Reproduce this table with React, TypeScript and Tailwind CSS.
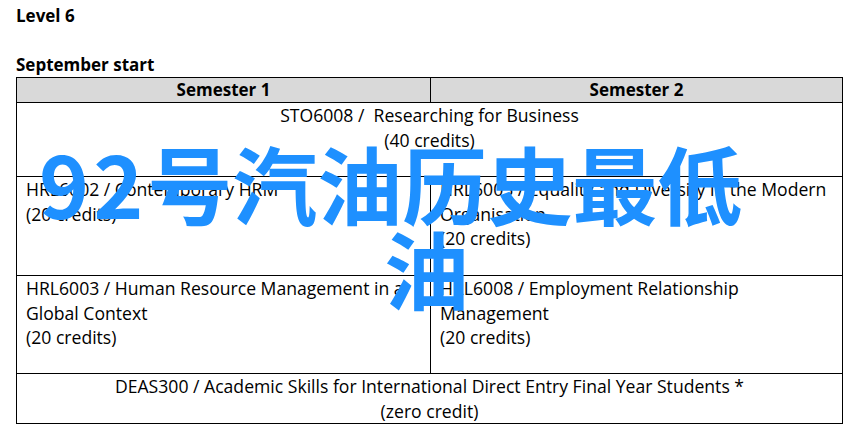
import React from 'react';

type Cell = {
    lines: string[];
};

type Row = {
    height: string;
    left?: Cell;
    right?: Cell;
    full?: Cell;
};

const rows: Row[] = [
    {height: 'h-[74px]', full: {lines: ['STO6008 /\u00a0 Researching for Business', '(40 credits)']}},
    {
        height: 'h-[99px]',
        left: {lines: ['HRL6002 / Contemporary HRM', '(20 credits)']},
        right: {lines: ['HRL6003 / Equality and Diversity in the Modern', 'Organisation', '(20 credits)']},
    },
    {
        height: 'h-[98px]',
        left: {lines: ['HRL6003 / Human Resource Management in a', 'Global Context', '(20 credits)']},
        right: {lines: ['HRL6008 / Employment Relationship', 'Management', '(20 credits)']},
    },
    {height: 'h-[50px]', full: {lines: ['DEAS300 / Academic Skills for International Direct Entry Final Year Students *', '(zero credit)']}},
];

function Lines({cell}: { cell: Cell }) {
    return (
        <>
            {cell.lines.map((line, i) => (
                <div key={i} className="leading-[24.5px]">{line}</div>
            ))}
        </>
    );
}

export default function App() {
    return (
        <div className="relative w-[856px] h-[434px] overflow-hidden bg-white text-black font-['Open_Sans',sans-serif] text-[17px]">
            <div className="pl-4 pt-1">
                <p className="font-bold leading-6">Level 6</p>
                <p className="mt-[25px] font-bold leading-6">September start</p>

                <table className="w-[827px] border-collapse border border-black">
                    <thead>
                        <tr className="h-[24px] bg-[#d9d9d9]">
                            <th className="w-[414px] border border-black font-bold leading-6 p-0">Semester 1</th>
                            <th className="border border-black font-bold leading-6 p-0">Semester 2</th>
                        </tr>
                    </thead>
                    <tbody className="text-[17.6px]">
                        {rows.map((row, i) => (
                            <tr key={i} className={row.height}>
                                {row.full ? (
                                    <td colSpan={2} className="border border-black align-top text-center p-0">
                                        <Lines cell={row.full}/>
                                    </td>
                                ) : (
                                    <>
                                        <td className="border border-black align-top pl-[9px] pt-0">
                                            {row.left && <Lines cell={row.left}/>}
                                        </td>
                                        <td className="border border-black align-top pl-[9px] pt-0">
                                            {row.right && <Lines cell={row.right}/>}
                                        </td>
                                    </>
                                )}
                            </tr>
                        ))}
                    </tbody>
                </table>
            </div>

            {/* watermark title over the table */}
            <div className="absolute left-[39px] top-[139px] text-[#1e90ff] font-bold text-[85px] leading-[85px] font-['Noto_Sans_CJK_SC',sans-serif] whitespace-nowrap">
                <div>
                    <span className="tracking-[4px]">92</span>
                    <span>号汽油历史最低</span>
                </div>
                <div className="pl-[345px]">油</div>
            </div>
        </div>
    );
}
